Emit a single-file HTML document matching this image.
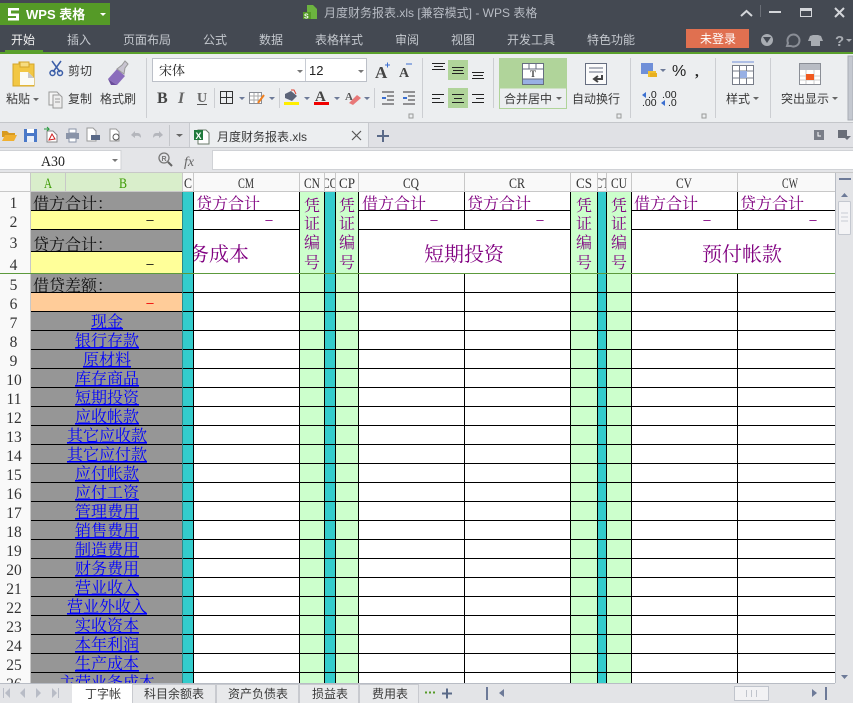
<!DOCTYPE html>
<html><head><meta charset="utf-8"><style>
html,body{margin:0;padding:0;background:#eceef0}
svg{display:block}
.u{font-family:"Liberation Sans","Noto Sans CJK SC",sans-serif;font-size:12px;fill:#3a3a3a}
.t{font-family:"Liberation Sans","Noto Sans CJK SC",sans-serif;font-size:12px;fill:#c4c8ce}
.c{font-family:"Liberation Serif","Noto Serif CJK SC",serif;font-size:16px;fill:#111}
.p{font-family:"Liberation Serif","Noto Serif CJK SC",serif;font-size:16px;fill:#800080}
.b{font-family:"Liberation Serif","Noto Serif CJK SC",serif;font-size:20px;fill:#800080}
.l{font-family:"Liberation Serif","Noto Serif CJK SC",serif;font-size:16px;fill:#0000ff;text-anchor:middle;text-decoration:underline}
.h{font-family:"Liberation Serif",serif;font-size:15px;fill:#333;text-anchor:middle}
.r{font-family:"Liberation Serif",serif;font-size:15.5px;fill:#333;text-anchor:middle}
.d{font-family:"Liberation Sans",sans-serif;font-size:13px;text-anchor:middle;fill:#800080}
.m{text-anchor:middle}
</style></head><body>
<svg width="853" height="703" viewBox="0 0 853 703" xmlns="http://www.w3.org/2000/svg">
<defs>
<clipPath id="cm"><rect x="194" y="230" width="105" height="43"/></clipPath>
<clipPath id="hc"><rect x="183" y="174" width="10" height="17"/></clipPath>
<clipPath id="hco"><rect x="325" y="174" width="10" height="17"/></clipPath>
<clipPath id="hct"><rect x="598" y="174" width="8" height="17"/></clipPath>
</defs>

<!-- title bar -->
<rect width="853" height="52" fill="#444952"/>
<rect x="0" y="3" width="110" height="22" fill="#559a27"/>
<path d="M8 8h11v2.500h-8v3h8v7h-11v-2.500h8v-2h-8z" fill="#fff"/>
<text x="26" y="19" style="font-family:'Liberation Sans','Noto Sans CJK SC',sans-serif;font-size:13px;font-weight:700;fill:#fff">WPS 表格</text>
<path d="M100 13h6l-3 3z" fill="#fff"/>
<path d="M307 5h6l4 4v10h-10z" fill="#6cb33f"/><rect x="303" y="12" width="8" height="7" fill="#559a27"/><text x="304" y="18.500" style="font:700 7px 'Liberation Sans';fill:#fff">S</text>
<text class="t" x="324" y="17" style="fill:#b8bcc4">月度财务报表.xls [兼容模式] - WPS 表格</text>
<path d="M741 16l5.500-5 5.500 5" fill="none" stroke="#d4d6da" stroke-width="2"/>
<rect x="760" y="5" width="1" height="12" fill="#6a6e76"/>
<rect x="769" y="11" width="12" height="2" fill="#d4d6da"/>
<rect x="800.500" y="8.500" width="11" height="8" fill="none" stroke="#d4d6da"/><rect x="800" y="8" width="12" height="3" fill="#d4d6da"/>
<path d="M835 8l9 9M844 8l-9 9" stroke="#d4d6da" stroke-width="2"/>
<!-- menu -->
<text class="t" x="11" y="44" style="fill:#f2f2f2">开始</text>
<text class="t" x="67" y="44">插入</text>
<text class="t" x="123" y="44">页面布局</text>
<text class="t" x="203" y="44">公式</text>
<text class="t" x="259" y="44">数据</text>
<text class="t" x="315" y="44">表格样式</text>
<text class="t" x="395" y="44">审阅</text>
<text class="t" x="451" y="44">视图</text>
<text class="t" x="507" y="44">开发工具</text>
<text class="t" x="587" y="44">特色功能</text>
<rect x="686" y="29" width="63" height="19" fill="#e07050"/>
<text class="t m" x="718" y="43" style="fill:#fff">未登录</text>
<circle cx="767" cy="40" r="6" fill="#a8acb2"/><path d="M763 37h8l-4 6z" fill="#444952"/>
<path d="M787 46l1-3a6 6 0 1 1 3 3z" fill="none" stroke="#8a8e96" stroke-width="2"/>
<path d="M810 36l3-1h5l3 1 2 5-3 0v5h-9v-5h-3z" fill="#a8acb2"/>
<text x="835" y="46" style="font:700 15px 'Liberation Sans';fill:#a8acb2">?</text>
<path d="M846 39h6l-3 3z" fill="#a8acb2"/>
<rect x="0" y="52" width="853" height="2" fill="#5aa02c"/>
<rect x="5" y="50" width="38" height="2" fill="#5aa02c"/>

<!-- ribbon -->
<rect y="54" width="853" height="68" fill="#eceef0"/>
<rect y="122" width="853" height="1" fill="#c4c6ca"/>
<rect x="848" y="56" width="5" height="64" fill="#c4c8d0" stroke="#a8acb4"/>
<!-- separators -->
<g fill="#ccced2"><rect x="146" y="58" width="1" height="60"/><rect x="422" y="58" width="1" height="60"/><rect x="493" y="58" width="1" height="50"/><rect x="630" y="58" width="1" height="60"/><rect x="715" y="58" width="1" height="60"/><rect x="770" y="58" width="1" height="60"/><rect x="214" y="88" width="1" height="20"/><rect x="279" y="88" width="1" height="20"/><rect x="374" y="88" width="1" height="20"/></g>
<!-- clipboard -->
<path d="M13 64h6v-2h10v2h5v22h-21z" fill="#f2c744" stroke="#d4a528"/>
<path d="M20 72h8l6 6v7h-14z" fill="#fbfbf5"/><path d="M28 72v6h6z" fill="#c8c8c8"/>
<path d="M20 62h9v5h-9z" fill="#f6dc80" stroke="#d4a528"/>
<text class="u" x="6" y="103">粘贴</text><path d="M33 98h6l-3 3z" fill="#666"/>
<!-- scissors -->
<path d="M52 61l8 11M61 61l-8 11" stroke="#3b5ea8" stroke-width="1.500" fill="none"/><circle cx="52.500" cy="73" r="2.500" fill="none" stroke="#3b5ea8" stroke-width="1.500"/><circle cx="60" cy="73" r="2.500" fill="none" stroke="#3b5ea8" stroke-width="1.500"/>
<text class="u" x="68" y="75">剪切</text>
<path d="M49 92h8l2 2v11h-10z" fill="#f4f4f4" stroke="#999"/><path d="M53 95h7l2 2v11h-9z" fill="#eeeeee" stroke="#999"/><path d="M55 99h5M55 102h5" stroke="#999"/>
<text class="u" x="68" y="103">复制</text>
<!-- brush -->
<path d="M108 79l9-10 8 7-8 9z" fill="#8a6cbc"/><path d="M117 69l5-4 3-4 3 3-3 4-1 6z" fill="#c8c4d0" stroke="#999"/><path d="M108 79l9 6-6 0z" fill="#6a4c9c"/>
<text class="u" x="100" y="103">格式刷</text>
<!-- font boxes -->
<rect x="152.500" y="58.500" width="214" height="23" fill="#fff" stroke="#bcc0c8"/>
<rect x="305" y="59" width="1" height="22" fill="#c8ccd4"/>
<text x="159" y="75" style="font:13px 'Noto Serif CJK SC',serif;fill:#222">宋体</text>
<text x="309" y="75" style="font:13px 'Liberation Sans';fill:#222">12</text>
<path d="M297 70h6l-3 3zM358 70h6l-3 3z" fill="#777"/>
<text x="375" y="78" style="font:700 17px 'Liberation Serif';fill:#444">A</text><path d="M385 65h5M387.500 62.500v5" stroke="#3b6fd0"/>
<text x="399" y="77" style="font:700 14px 'Liberation Serif';fill:#444">A</text><path d="M406 64h6" stroke="#3b6fd0"/>
<text x="157" y="103" style="font:700 16px 'Liberation Serif';fill:#444">B</text>
<text x="178" y="103" style="font:italic 700 16px 'Liberation Serif';fill:#666">I</text>
<text x="197" y="102" style="font:700 14px 'Liberation Serif';fill:#666">U</text><rect x="197" y="104" width="10" height="1" fill="#555"/>
<rect x="220.500" y="91.500" width="12" height="12" fill="none" stroke="#333"/><path d="M226.500 92v11M221 97.500h11" stroke="#333"/>
<path d="M239 97h6l-3 3zM269 97h6l-3 3zM304 97h6l-3 3zM334 97h6l-3 3zM364 97h6l-3 3z" fill="#6d7a98"/>
<rect x="249.500" y="92.500" width="12" height="11" fill="#fff" stroke="#8a8e96"/><path d="M250 96h11M254 93v10M258 93v10M250 100h11" stroke="#aaa"/><path d="M258 103l6-8" stroke="#f08020" stroke-width="2"/>
<path d="M285 94l6-3 6 5-5 5-7-3z" fill="#5c6478"/><path d="M291 90h3l2 4" stroke="#e04030" fill="none"/>
<rect x="284" y="102" width="15" height="3" fill="#ffee00"/>
<text x="315" y="101" style="font:700 15px 'Liberation Serif';fill:#444">A</text>
<rect x="314" y="102" width="15" height="3" fill="#f00000"/>
<text x="345" y="100" style="font:700 11px 'Liberation Serif';fill:#555">A</text><path d="M349 103l8-8 4 3-8 7z" fill="#e87878"/>
<path d="M382 92h12M387 96h7M387 100h7M382 104h12M403 92h12M408 96h7M408 100h7M403 104h12" stroke="#333"/>
<path d="M382 98h4M403 98h4" stroke="#3b6fd0" stroke-width="2"/>
<rect x="409" y="114" width="4" height="4" fill="none" stroke="#999"/>
<!-- alignment -->
<rect x="448" y="60" width="20" height="20" fill="#b0d49a"/>
<rect x="448" y="88" width="20" height="20" fill="#b0d49a"/>
<path d="M432 63.500h13M434 66.500h9M432 69.500h13M452 67.500h12M453 70.500h10M452 73.500h12M472 72.500h12M473 75.500h10M472 78.500h12" stroke="#222" fill="none"/>
<path d="M432 94.500h12M432 98.500h8M432 102.500h12M452 94.500h12M454 98.500h8M452 102.500h12M472 94.500h12M476 98.500h8M472 102.500h12" stroke="#222" fill="none"/>
<!-- merge -->
<rect x="499" y="58" width="68" height="30" fill="#b0d49a"/>
<rect x="499.500" y="88" width="67" height="20.500" fill="#eceef0" stroke="#b0d49a"/>
<rect x="522.500" y="63.500" width="21" height="21" fill="#fff" stroke="#666e80"/>
<rect x="523" y="79" width="20" height="5" fill="#98b0e4"/>
<path d="M523 69h20M529 64v5M536 64v5M523 79h20" stroke="#666e80"/>
<text x="533" y="77" class="m" style="font:700 9px 'Liberation Serif';fill:#444">T</text>
<text class="u" x="504" y="103">合并居中</text><path d="M556 97h6l-3 3z" fill="#666"/>
<!-- wrap -->
<rect x="585.500" y="63.500" width="21" height="21" fill="#fbfbfb" stroke="#666e80"/>
<path d="M589 68h14M589 72h14" stroke="#666e80"/><path d="M602 75v4h-7M598 76l-4 3 4 3" fill="none" stroke="#444" stroke-width="2"/>
<text class="u" x="572" y="103">自动换行</text>
<rect x="617" y="114" width="4" height="4" fill="none" stroke="#999"/>
<!-- number -->
<rect x="641" y="63" width="12" height="11" fill="#6f8fd8"/><rect x="648" y="71" width="8" height="6" fill="#f0c030"/><rect x="650" y="73" width="7" height="4" fill="#e8b020"/>
<path d="M660 69h6l-3 3z" fill="#6d7a98"/>
<text x="672" y="76" style="font:16px 'Liberation Sans';fill:#222">%</text>
<text x="695" y="76" style="font:700 15px 'Liberation Serif';fill:#222">,</text>
<text x="648" y="98" style="font:10.500px 'Liberation Sans';fill:#222">.0</text><text x="642" y="106" style="font:10.500px 'Liberation Sans';fill:#222">.00</text>
<text x="662" y="98" style="font:10.500px 'Liberation Sans';fill:#222">.00</text><text x="668" y="106" style="font:10.500px 'Liberation Sans';fill:#222">.0</text>
<path d="M642 95l4-3v6zM661 103l4-3v6z" fill="#3b6fd0"/>
<rect x="702" y="114" width="4" height="4" fill="none" stroke="#999"/>
<!-- style -->
<path d="M732 62h22" stroke="#6f8fd8"/>
<rect x="732.500" y="65.500" width="21" height="19" fill="#fff" stroke="#777c88"/>
<path d="M732 71h22M732 78h22M739.500 65v20M746.500 65v20" stroke="#777c88"/>
<rect x="740" y="71" width="7" height="7" fill="#98b0e4"/>
<text class="u" x="726" y="103">样式</text><path d="M753 97h6l-3 3z" fill="#666"/>
<!-- highlight -->
<rect x="799.500" y="63.500" width="21" height="21" fill="#fff" stroke="#8a8e96"/>
<rect x="800" y="64" width="20" height="6" fill="#b8bcc4"/>
<path d="M800 76h20M800 80h20M806 70v14M814 70v14" stroke="#ccc"/>
<rect x="806" y="74" width="8" height="6" fill="#f05a20"/>
<text class="u" x="781" y="103">突出显示</text><path d="M832 97h6l-3 3z" fill="#666"/>

<!-- QAT + doc tab bar -->
<rect y="123" width="853" height="25" fill="#e0e1e5"/>
<path d="M2 137v-6h5l2 2h6v4z" fill="#d89a20"/><path d="M2 141l3-6h12l-3 6z" fill="#f0b030"/>
<rect x="24" y="129" width="13" height="13" fill="#4a78c8"/><rect x="27" y="129" width="7" height="4" fill="#fff"/><rect x="27" y="136" width="7" height="6" fill="#e8eef8"/>
<path d="M47 131h6l4 4v7h-10z" fill="#fff" stroke="#888"/><path d="M49 140l3-6 3 5z" fill="none" stroke="#d02020"/><path d="M44 129h5l-2-2M49 129l-2 2" stroke="#2a9a40" fill="none"/>
<rect x="66" y="133" width="13" height="6" fill="#8a94a8"/><rect x="69" y="129" width="7" height="4" fill="#fff" stroke="#8a94a8"/><rect x="69" y="138" width="7" height="4" fill="#fff" stroke="#8a94a8"/>
<path d="M87 128h6l3 3v10h-9z" fill="#fff" stroke="#999"/><rect x="91" y="135" width="9" height="5" fill="#5a6a88"/>
<path d="M110 129h6l3 3v9h-9z" fill="#fff" stroke="#999"/><circle cx="116" cy="137" r="3" fill="none" stroke="#555"/>
<path d="M131 135l4-4v2h3q3 0 3 5q-2-3-6-2v2z" fill="#b4b6bc"/>
<path d="M163 135l-4-4v2h-3q-3 0-3 5q2-3 6-2v2z" fill="#b4b6bc"/>
<rect x="169" y="125" width="1" height="21" fill="#c4c6ca"/>
<path d="M176 134h7l-3.500 3z" fill="#666"/>
<rect x="190" y="123" width="178" height="25" fill="#eceef0"/>
<rect x="189" y="123" width="1" height="25" fill="#c8cacf"/><rect x="368" y="123" width="1" height="25" fill="#c8cacf"/>
<path d="M198 130h8l3 3v11h-11z" fill="#fff" stroke="#6a7a6a"/><rect x="194" y="130" width="9" height="10" fill="#1f7a3c"/><text x="195.500" y="139" style="font:700 9px 'Liberation Sans';fill:#fff">X</text>
<text class="u" x="217" y="141">月度财务报表.xls</text>
<path d="M352 131l9 9M361 131l-9 9" stroke="#555" stroke-width="1.200"/>
<path d="M377 136h12M383 130v12" stroke="#5a6a88" stroke-width="2"/>
<rect x="814" y="130" width="10" height="10" fill="#7a7e88"/><path d="M818 132v4h3" stroke="#fff" fill="none"/>
<rect x="838" y="130" width="9" height="8" fill="#6a6e78"/><path d="M843 136h8l-4 4z" fill="#6a6e78"/>
<rect y="147" width="853" height="1" fill="#c4c6ca"/>

<!-- formula bar -->
<rect y="148" width="853" height="24" fill="#e4e5e8"/>
<rect x="-1" y="150.500" width="122" height="19" fill="#fff" stroke="#d0d2d6"/>
<text x="53" y="166" class="h" style="fill:#222" textLength="24" lengthAdjust="spacingAndGlyphs">A30</text>
<path d="M112 159h6l-3 3z" fill="#777"/>
<circle cx="164" cy="158" r="5" fill="none" stroke="#777" stroke-width="1.300"/><path d="M168 162l4 4" stroke="#666" stroke-width="2"/><text x="161.500" y="161" style="font:700 7px 'Liberation Sans';fill:#777">R</text>
<text x="184" y="166" style="font:italic 14px 'Liberation Serif';fill:#666">fx</text>
<rect x="212.500" y="150.500" width="641" height="19" fill="#fff" stroke="#d0d2d6"/>
<rect y="172" width="853" height="1" fill="#c8c8c8"/>

<!-- grid base -->
<rect x="0" y="173" width="835" height="19" fill="#f9f9f9"/>
<rect x="0" y="192" width="31" height="491" fill="#f9f9f9"/>
<rect x="194" y="192" width="641" height="491" fill="#fff"/>
<rect x="31" y="192" width="152" height="491" fill="#969696"/>
<rect x="31" y="211" width="152" height="18" fill="#ffff99"/>
<rect x="31" y="252" width="152" height="21" fill="#ffff99"/>
<rect x="31" y="293" width="152" height="18" fill="#ffcc99"/>
<g fill="#33cccc"><rect x="183" y="192" width="10" height="491"/><rect x="325" y="192" width="10" height="491"/><rect x="598" y="192" width="8" height="491"/></g>
<g fill="#ccffcc"><rect x="300" y="192" width="25" height="491"/><rect x="336" y="192" width="22" height="491"/><rect x="571" y="192" width="26" height="491"/><rect x="607" y="192" width="24" height="491"/></g>
<rect x="31" y="173" width="34" height="18" fill="#d9eecb"/><rect x="66" y="173" width="116" height="18" fill="#d9eecb"/>

<!-- header labels -->
<text class="h" x="48" y="188" style="fill:#3a9a00" textLength="8" lengthAdjust="spacingAndGlyphs">A</text>
<text class="h" x="123" y="188" style="fill:#3a9a00" textLength="8" lengthAdjust="spacingAndGlyphs">B</text>
<text class="h" x="188" y="188" clip-path="url(#hc)" textLength="8" lengthAdjust="spacingAndGlyphs">C</text>
<text class="h" x="246" y="188" textLength="16" lengthAdjust="spacingAndGlyphs">CM</text>
<text class="h" x="312" y="188" textLength="16" lengthAdjust="spacingAndGlyphs">CN</text>
<text class="h" x="330" y="188" clip-path="url(#hco)" textLength="16" lengthAdjust="spacingAndGlyphs">CO</text>
<text class="h" x="347" y="188" textLength="16" lengthAdjust="spacingAndGlyphs">CP</text>
<text class="h" x="411" y="188" textLength="16" lengthAdjust="spacingAndGlyphs">CQ</text>
<text class="h" x="517" y="188" textLength="16" lengthAdjust="spacingAndGlyphs">CR</text>
<text class="h" x="584" y="188" textLength="16" lengthAdjust="spacingAndGlyphs">CS</text>
<text class="h" x="602" y="188" clip-path="url(#hct)" textLength="16" lengthAdjust="spacingAndGlyphs">CT</text>
<text class="h" x="619" y="188" textLength="16" lengthAdjust="spacingAndGlyphs">CU</text>
<text class="h" x="684" y="188" textLength="16" lengthAdjust="spacingAndGlyphs">CV</text>
<text class="h" x="790" y="188" textLength="16" lengthAdjust="spacingAndGlyphs">CW</text>
<path d="M30.500 173V683M65.500 173V191M182.500 173V191M193.500 173V191M299.500 173V191M324.500 173V191M335.500 173V191M358.500 173V191M464.500 173V191M570.500 173V191M597.500 173V191M606.500 173V191M631.500 173V191M737.500 173V191M0 191.500H835" stroke="#c8c8c8" fill="none"/>

<!-- row numbers -->
<text class="r" x="13.500" y="208">1</text><text class="r" x="13.500" y="227">2</text><text class="r" x="13.500" y="248">3</text><text class="r" x="13.500" y="270">4</text><text class="r" x="13.500" y="290">5</text><text class="r" x="13.500" y="309">6</text><text class="r" x="13.500" y="328">7</text><text class="r" x="13.500" y="347">8</text><text class="r" x="13.500" y="366">9</text><text class="r" x="14" y="385">10</text><text class="r" x="14" y="404">11</text><text class="r" x="14" y="423">12</text><text class="r" x="14" y="442">13</text><text class="r" x="14" y="461">14</text><text class="r" x="14" y="480">15</text><text class="r" x="14" y="499">16</text><text class="r" x="14" y="518">17</text><text class="r" x="14" y="537">18</text><text class="r" x="14" y="556">19</text><text class="r" x="14" y="575">20</text><text class="r" x="14" y="594">21</text><text class="r" x="14" y="613">22</text><text class="r" x="14" y="632">23</text><text class="r" x="14" y="651">24</text><text class="r" x="14" y="670">25</text><text class="r" x="14" y="689">26</text>

<!-- cell text -->
<text class="c" x="33" y="209">借方合计：</text>
<text class="c" x="33" y="250">贷方合计：</text>
<text class="c" x="33" y="291">借贷差额：</text>
<text class="d" x="150" y="224" style="fill:#111">–</text>
<text class="d" x="150" y="268" style="fill:#111">–</text>
<text class="d" x="150" y="307" style="fill:#f00000">–</text>
<text class="p" x="196" y="209">贷方合计</text>
<text class="p" x="362" y="209">借方合计</text>
<text class="p" x="467" y="209">贷方合计</text>
<text class="p" x="634" y="209">借方合计</text>
<text class="p" x="740" y="209">贷方合计</text>
<text class="d" x="269" y="224">–</text><text class="d" x="434" y="224">–</text><text class="d" x="540" y="224">–</text><text class="d" x="707" y="224">–</text><text class="d" x="813" y="224">–</text>
<text class="b" x="169" y="261" clip-path="url(#cm)">财务成本</text>
<text class="b" x="424" y="261">短期投资</text>
<text class="b" x="702" y="261">预付帐款</text>
<text class="p m" x="312" y="211">凭</text><text class="p m" x="312" y="229">证</text><text class="p m" x="312" y="248">编</text><text class="p m" x="312" y="268">号</text>
<text class="p m" x="347" y="211">凭</text><text class="p m" x="347" y="229">证</text><text class="p m" x="347" y="248">编</text><text class="p m" x="347" y="268">号</text>
<text class="p m" x="584" y="211">凭</text><text class="p m" x="584" y="229">证</text><text class="p m" x="584" y="248">编</text><text class="p m" x="584" y="268">号</text>
<text class="p m" x="619" y="211">凭</text><text class="p m" x="619" y="229">证</text><text class="p m" x="619" y="248">编</text><text class="p m" x="619" y="268">号</text>
<text class="l" x="107" y="327">现金</text>
<text class="l" x="107" y="346">银行存款</text>
<text class="l" x="107" y="365">原材料</text>
<text class="l" x="107" y="384">库存商品</text>
<text class="l" x="107" y="403">短期投资</text>
<text class="l" x="107" y="422">应收帐款</text>
<text class="l" x="107" y="441">其它应收款</text>
<text class="l" x="107" y="460">其它应付款</text>
<text class="l" x="107" y="479">应付帐款</text>
<text class="l" x="107" y="498">应付工资</text>
<text class="l" x="107" y="517">管理费用</text>
<text class="l" x="107" y="536">销售费用</text>
<text class="l" x="107" y="555">制造费用</text>
<text class="l" x="107" y="574">财务费用</text>
<text class="l" x="107" y="593">营业收入</text>
<text class="l" x="107" y="612">营业外收入</text>
<text class="l" x="107" y="631">实收资本</text>
<text class="l" x="107" y="650">本年利润</text>
<text class="l" x="107" y="669">生产成本</text>
<text class="l" x="107" y="688">主营业务成本</text>

<!-- grid lines -->
<path d="M31 210.500H183M194 210.500H300M359 210.500H571M632 210.500H835M31 229.500H183M194 229.500H300M359 229.500H571M632 229.500H835M31 251.500H183M31 292.500H835M31 311.500H835M31 330.500H835M31 349.500H835M31 368.500H835M31 387.500H835M31 406.500H835M31 425.500H835M31 444.500H835M31 463.500H835M31 482.500H835M31 501.500H835M31 520.500H835M31 539.500H835M31 558.500H835M31 577.500H835M31 596.500H835M31 615.500H835M31 634.500H835M31 653.500H835M31 672.500H835" stroke="#000" fill="none"/>
<path d="M193.500 192V683M299.500 192V683M324.500 192V683M335.500 192V683M358.500 192V683M570.500 192V683M597.500 192V683M606.500 192V683M631.500 192V683M464.500 192V229M464.500 273V683M737.500 192V229M737.500 273V683" stroke="#000" fill="none"/>
<path d="M182.500 192V683" stroke="#2a8a8a" fill="none"/>
<rect x="0" y="273" width="835" height="1" fill="#5c9a3c"/>

<!-- scrollbar -->
<rect x="835" y="173" width="18" height="530" fill="#e3e4e7"/>
<rect x="835" y="173" width="1" height="510" fill="#b8bcc4"/>
<rect x="839" y="178" width="12" height="2" fill="#6d7a98"/>
<path d="M841 197h7l-3.500-4z" fill="#6d7a98"/>
<rect x="838.500" y="201.500" width="12" height="33" rx="1" fill="#f4f4f6" stroke="#c4c8d0"/>
<path d="M841 213h7M841 217h7M841 221h7" stroke="#c8ccd4"/>
<path d="M841 675h7l-3.500 4z" fill="#6d7a98"/>

<!-- sheet tabs -->
<rect y="683" width="853" height="20" fill="#e3e4e7"/>
<rect y="683" width="835" height="1" fill="#b8bcc4"/>
<rect x="72" y="684" width="60" height="19" fill="#fff"/>
<g fill="#e8e9eb" stroke="#c8cacf"><rect x="132.500" y="684.500" width="83" height="19"/><rect x="216.500" y="684.500" width="82" height="19"/><rect x="299.500" y="684.500" width="59" height="19"/><rect x="359.500" y="684.500" width="59" height="19"/></g>
<text class="u" x="85" y="698">丁字帐</text>
<text class="u" x="144" y="698">科目余额表</text>
<text class="u" x="228" y="698">资产负债表</text>
<text class="u" x="312" y="698">损益表</text>
<text class="u" x="372" y="698">费用表</text>
<path d="M3 688v10h1v-10zM10 688l-5 5 5 5zM25 688l-5 5 5 5zM36 688l5 5-5 5zM52 688l5 5-5 5zM58 688v10h1v-10z" fill="#b8bcc6"/>
<path d="M425 692.500h2M429 692.500h2M433 692.500h2" stroke="#559a27" stroke-width="2"/>
<path d="M442 693.500h10M447 688.500v10" stroke="#5a6a88" stroke-width="2"/>
<rect x="486" y="687" width="2" height="13" fill="#6d7a98"/>
<path d="M504 689l-5 4 5 4z" fill="#6d7a98"/>
<rect x="734.500" y="686.500" width="34" height="14" fill="#f2f2f4" stroke="#c0c4cc"/>
<path d="M746.500 690v7M751.500 690v7M756.500 690v7" stroke="#c0c4cc"/>
<path d="M812 689l5 4-5 4z" fill="#6d7a98"/>
<rect x="825" y="687" width="2" height="13" fill="#6d7a98"/>
</svg>
</body></html>
